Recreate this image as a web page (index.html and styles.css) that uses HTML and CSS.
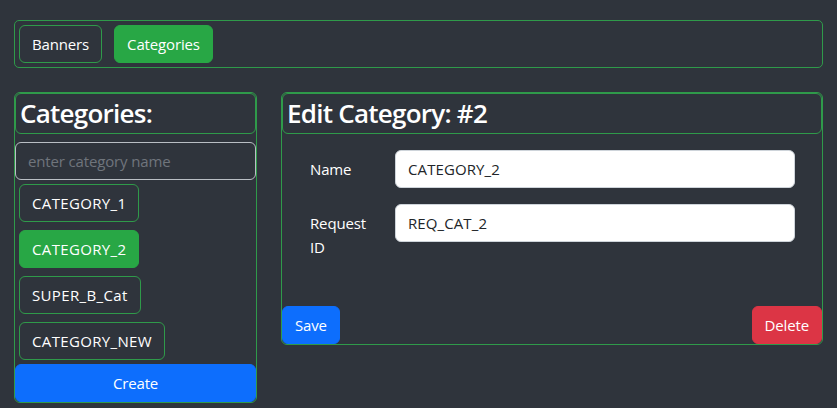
FILE: index.html
```html
<!DOCTYPE html>
<html lang="en">
<head>
<meta charset="utf-8">
<title>Categories</title>
<link rel="stylesheet" href="styles.css">
</head>
<body>
<div class="page">
  <nav class="topbar">
    <button class="btn btn-outline">Banners</button>
    <button class="btn btn-success">Categories</button>
  </nav>
  <main class="layout">
    <section class="card card-list">
      <h3 class="card-title">Categories:</h3>
      <input class="field field-dark" type="text" placeholder="enter category name">
      <div class="cat-list">
        <button class="btn btn-outline cat">CATEGORY_1</button>
        <button class="btn btn-success cat">CATEGORY_2</button>
        <button class="btn btn-outline cat">SUPER_B_Cat</button>
        <button class="btn btn-outline cat">CATEGORY_NEW</button>
      </div>
      <button class="btn btn-primary btn-block">Create</button>
    </section>
    <section class="card card-edit">
      <h3 class="card-title">Edit Category: #2</h3>
      <form class="edit-form">
        <label class="form-label" for="name">Name</label>
        <input id="name" class="field field-light" type="text" value="CATEGORY_2">
        <label class="form-label" for="req">Request ID</label>
        <input id="req" class="field field-light" type="text" value="REQ_CAT_2">
      </form>
      <div class="card-footer">
        <button class="btn btn-primary">Save</button>
        <button class="btn btn-danger">Delete</button>
      </div>
    </section>
  </main>
</div>
</body>
</html>
```
FILE: styles.css
```css
* { box-sizing: border-box; }
html, body { margin: 0; padding: 0; }
body {
  background: #2f343c;
  color: #fff;
  font-family: "Open Sans", "Noto Sans", sans-serif;
  font-size: 15px;
  line-height: 24px;
  width: 837px;
  height: 408px;
  overflow: hidden;
}
.page { padding: 20px 14px 0; }

.topbar {
  display: flex;
  gap: 12px;
  padding: 4px;
  border: 1px solid #2f9a4a;
  border-radius: 5px;
}

.btn {
  font-family: inherit;
  font-size: 15px;
  line-height: 24px;
  letter-spacing: -0.15px;
  height: 38px;
  padding: 6px 12px;
  border: 1px solid transparent;
  border-radius: 6px;
  color: #fff;
  background: transparent;
  white-space: nowrap;
  cursor: pointer;
}
.btn-outline { border-color: #2f9a4a; }
.btn-success { background: #28a745; border-color: #28a745; }
.btn-primary { background: #0d6efd; border-color: #0d6efd; }
.btn-danger { background: #dc3545; border-color: #dc3545; }

.layout {
  display: grid;
  grid-template-columns: 243px 542px;
  gap: 24px;
  align-items: start;
  margin-top: 24px;
}

.card {
  border: 1px solid #2f9a4a;
  border-radius: 6px;
  display: flex;
  flex-direction: column;
}
.card-title {
  margin: 0;
  height: 41px;
  padding: 0 4px;
  border: 1px solid #2f9a4a;
  border-radius: 6px;
  font-size: 26px;
  font-weight: 600;
  line-height: 38px;
  letter-spacing: -0.75px;
}

.field {
  font-family: inherit;
  font-size: 15px;
  line-height: 24px;
  height: 38px;
  padding: 6px 12px;
  border-radius: 6px;
  letter-spacing: 0.1px;
  width: 100%;
}
.field-dark {
  margin-top: 8px;
  background: transparent;
  border: 1px solid #b9bec4;
  color: #fff;
  letter-spacing: -0.15px;
}
.field-dark::placeholder { color: #6f757c; }
.field-light {
  background: #fff;
  border: 1px solid #ced4da;
  color: #212529;
}

.cat-list {
  display: flex;
  flex-direction: column;
  align-items: flex-start;
  padding: 0;
}
.cat { margin: 4px; letter-spacing: 0.35px; }
.btn-block { width: 100%; }

.edit-form {
  display: grid;
  grid-template-columns: 73px 1fr;
  column-gap: 12px;
  row-gap: 16px;
  align-items: start;
  padding: 16px 27px 40px 28px;
  margin: 0;
}
.form-label {
  padding: 7px 0;
  line-height: 24px;
  letter-spacing: -0.15px;
}
.card-footer {
  display: flex;
  justify-content: space-between;
}
```
